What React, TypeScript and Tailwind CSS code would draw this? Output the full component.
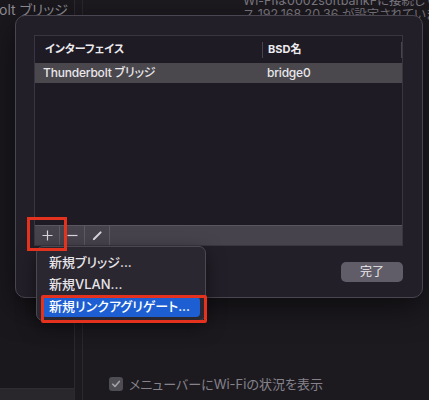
import React from 'react';

const jp = "font-['Inter','Noto_Sans_CJK_JP',sans-serif] [font-feature-settings:'palt']";

const MENU_ITEMS = ['新規ブリッジ...', '新規VLAN...', '新規リンクアグリゲート...'];

const App: React.FC = () => {
  return (
    <div className={`relative w-[429px] h-[400px] overflow-hidden bg-[#1c1a1f] ${jp}`}>
      {/* background window */}
      <div className="flex h-full">
        <div className="w-[75px] shrink-0 h-full flex flex-col border-r border-[#2c2a30] bg-[#1a181d]">
          <div className="w-[68px] overflow-hidden flex justify-end mt-[2px]">
            <span className="shrink-0 whitespace-nowrap text-[14px] leading-[16px] text-[#8f8c95]">Thunderbolt ブリッジ</span>
          </div>
          <div className="flex-1" />
          <div className="h-[12px] bg-[#29272c] border-t border-[#2f2d33]" />
        </div>
        <div className="w-[8px] shrink-0 h-full border-r border-[#2a282e]" />
        <div className="flex-1 min-w-0 h-full flex flex-col justify-between overflow-hidden">
          <div className="ml-[160px] mt-[-6px] text-[12.5px] leading-[14px] text-[#7c7982] whitespace-nowrap">
            <div>Wi-Fiは0002softbankFに接続してい</div>
            <div>ス 192.168.20.36 が設定されています。</div>
          </div>
          <div className="ml-[26px] mb-[6px] flex items-center gap-[6px]">
            <div className="w-[14px] h-[14px] rounded-[3px] bg-[#4f4d54] flex items-center justify-center">
              <svg width="10" height="10" viewBox="0 0 10 10" fill="none">
                <path d="M1.8 5.2 L4 7.4 L8.3 2.4" stroke="#a4a2a8" strokeWidth="1.6" strokeLinecap="round" strokeLinejoin="round" />
              </svg>
            </div>
            <span className="text-[13px] text-[#85828b]">メニューバーにWi-Fiの状況を表示</span>
          </div>
        </div>
      </div>

      {/* sheet */}
      <div className="absolute left-[15px] top-[15px] w-[408px] h-[283px] rounded-[10px] border border-[#4a4651] bg-[#231f29] shadow-[0_10px_30px_rgba(0,0,0,0.55)] pt-[19px] pl-[18px] pr-[19px]">
        <div className="h-[211px] flex flex-col border border-[#3a3641] bg-[#1f1b24]">
          <div className="h-[27px] flex items-center shrink-0">
            <div className="w-[227px] pl-[10px] text-[11px] font-bold text-[#ecebef]">インターフェイス</div>
            <div className="w-px h-[16px] bg-[#48444e]" />
            <div className="flex-1 pl-[5px] text-[11px] font-bold text-[#ecebef]">BSD名</div>
            <div className="w-px h-[16px] bg-[#48444e]" />
          </div>
          <div className="h-[20px] flex items-center bg-[#4a484d] shrink-0">
            <div className="w-[232px] pl-[8px] text-[12px] font-medium tracking-[-0.2px] text-[#e9e7ec]">Thunderbolt ブリッジ</div>
            <div className="flex-1 text-[12px] font-medium tracking-[-0.2px] text-[#e9e7ec]">bridge0</div>
          </div>
          <div className="flex-1" />
          <div className="h-[20px] flex bg-[#47434d] border-t border-[#5a5661] shrink-0">
            <div className="w-[25px] h-full flex items-center justify-center border-r border-[#5e5a65]">
              <svg width="11" height="11" viewBox="0 0 11 11">
                <path d="M5.5 0.5 V10.5 M0.5 5.5 H10.5" stroke="#d8d6dc" strokeWidth="1.2" />
              </svg>
            </div>
            <div className="w-[25px] h-full flex items-center justify-center border-r border-[#5e5a65]">
              <svg width="11" height="11" viewBox="0 0 11 11">
                <path d="M0.5 5.5 H10.5" stroke="#d8d6dc" strokeWidth="1.2" />
              </svg>
            </div>
            <div className="w-[25px] h-full flex items-center justify-center border-r border-[#5e5a65]">
              <svg width="11" height="11" viewBox="0 0 11 11">
                <path d="M2 9 L8.6 2.4" stroke="#d8d6dc" strokeWidth="2" strokeLinecap="round" />
                <path d="M1.2 9.8 L2.4 8.6" stroke="#d8d6dc" strokeWidth="1.2" />
              </svg>
            </div>
            <div className="flex-1" />
          </div>
        </div>
        <div className="mt-[16px] flex justify-end">
          <button className="w-[62px] h-[20px] rounded-[5px] bg-[#615d68] text-[12px] text-[#ecebef] flex items-center justify-center">
            完了
          </button>
        </div>
      </div>

      {/* popup menu */}
      <div className="absolute left-[36px] top-[246px] w-[170px] rounded-[7px] border border-[#4c4853] bg-[#2a2730] shadow-[0_6px_18px_rgba(0,0,0,0.5)] pt-[5px] pb-[3px] px-[5px]">
        {MENU_ITEMS.map((item, i) => (
          <div
            key={item}
            className={`flex items-center pl-[7px] rounded-[4px] text-[13px] font-medium ${i === 2 ? 'bg-[#1d5fd3] text-white mt-[1px] h-[20px]' : 'h-[22px] text-[#e7e5ea]'}`}
          >
            {item}
          </div>
        ))}
      </div>

      {/* red annotation boxes */}
      <div className="absolute left-[27px] top-[217px] w-[40px] h-[34px] border-[3px] border-[#e5321f]" />
      <div className="absolute left-[41px] top-[295px] w-[166px] h-[28px] border-[3px] border-[#e5321f] rounded-[2px]" />
    </div>
  );
};

export default App;
